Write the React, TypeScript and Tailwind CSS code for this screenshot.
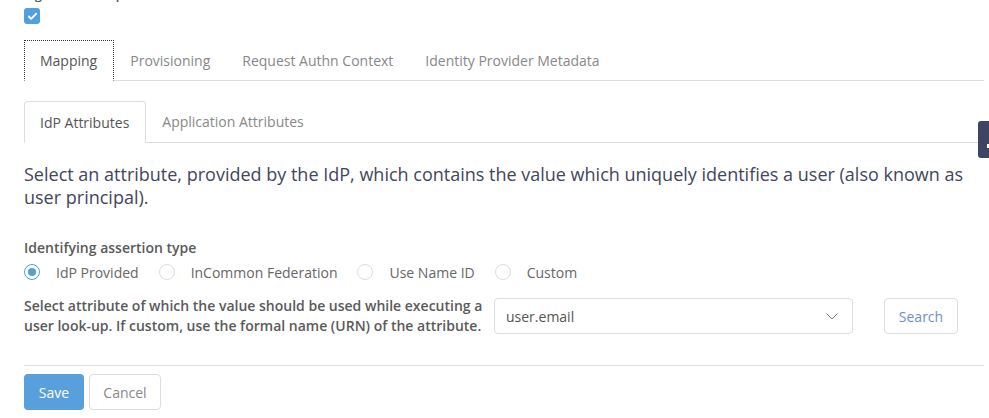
import React, { useState } from 'react';
import { Check } from 'lucide-react';

const topTabs = ['Mapping', 'Provisioning', 'Request Authn Context', 'Identity Provider Metadata'];
const subTabs = ['IdP Attributes', 'Application Attributes'];
const assertionTypes = ['IdP Provided', 'InCommon Federation', 'Use Name ID', 'Custom'];

export default function App() {
  const [assertion, setAssertion] = useState('IdP Provided');

  return (
    <div className="relative min-h-[418px] bg-white font-['Open_Sans',sans-serif] text-[14px] text-[#555] overflow-hidden">
      <div className="pl-6 pr-[5px]">
        {/* Checkbox field, label scrolled off the top */}
        <div className="-mt-[15px] text-[13px] font-semibold leading-[18px] text-[#555]">Sign Authn Request</div>
        <div className="mt-[5px] flex h-4 w-4 items-center justify-center rounded-[3px] bg-[#519fe0]">
          <Check className="h-[11px] w-[11px] text-white" strokeWidth={4} />
        </div>

        {/* Top tabs */}
        <div className="mt-4 flex border-b border-[#ddd]">
          {topTabs.map((t, i) => (
            <div
              key={t}
              className={
                i === 0
                  ? '-mb-px flex h-[41px] items-center border border-dotted border-[#333] border-b-white bg-white pl-[15px] pr-4 text-[#555]'
                  : 'flex h-10 items-center px-4 text-[#888]'
              }
            >
              {t}
            </div>
          ))}
        </div>

        {/* Sub tabs */}
        <div className="mt-5 flex border-b border-[#ddd]">
          {subTabs.map((t, i) => (
            <div
              key={t}
              className={
                i === 0
                  ? '-mb-px flex h-[42px] items-center rounded-t-[4px] border border-[#ddd] border-b-white bg-white pl-[15px] pr-4 text-[#555]'
                  : 'flex h-[41px] items-center px-4 text-[#888]'
              }
            >
              {t}
            </div>
          ))}
        </div>

        <p className="mt-5 text-[18px] leading-[23px] text-[#41465c]">
          Select an attribute, provided by the IdP, which contains the value which uniquely identifies a user (also known as user principal).
        </p>

        <div className="mt-[29px] text-[14px] font-semibold leading-5 text-[#5a5a5a]">Identifying assertion type</div>
        <div className="mt-[4px] flex h-5 items-center">
          {assertionTypes.map((a) => {
            const on = assertion === a;
            return (
              <label key={a} className="mr-[20px] flex cursor-pointer items-center" onClick={() => setAssertion(a)}>
                <span
                  className={
                    on
                      ? 'flex h-4 w-4 items-center justify-center rounded-full border border-[#519fe0] bg-white'
                      : 'h-4 w-4 rounded-full border border-[#ddd] bg-white'
                  }
                >
                  {on && <span className="h-2 w-2 rounded-full bg-[#519fe0]" />}
                </span>
                <span className="ml-4 text-[#666]">{a}</span>
              </label>
            );
          })}
        </div>

        <div className="mt-[14px] flex items-center">
          <div className="w-[470px] pr-[6px] text-[14px] font-semibold leading-5 text-[#5a5a5a]">
            Select attribute of which the value should be used while executing a user look-up. If custom, use the formal name (URN) of the attribute.
          </div>
          <div className="flex h-9 w-[359px] items-center justify-between rounded-[4px] border border-[#ddd] pl-[11px] pr-[14px] text-[#555]">
            <span>user.email</span>
            <svg width="12" height="7" viewBox="0 0 12 7" fill="none" stroke="#777" strokeWidth="1">
              <polyline points="0.5,0.5 6,6 11.5,0.5" />
            </svg>
          </div>
          <button className="ml-[31px] flex h-9 w-[74px] items-center justify-center rounded-[4px] border border-[#ddd] bg-white text-[#6a92bd]">
            Search
          </button>
        </div>

        <div className="mt-[29px] border-t border-[#ddd]" />

        <div className="mt-2 flex gap-[5px]">
          <button className="flex h-9 w-[60px] items-center justify-center rounded-[4px] bg-[#58a0dc] text-white">Save</button>
          <button className="flex h-9 w-[72px] items-center justify-center rounded-[4px] border border-[#ddd] bg-white text-[#888]">
            Cancel
          </button>
        </div>
      </div>

      {/* Side feedback tab */}
      <div className="absolute right-0 top-[121px] flex h-[37px] w-[11px] items-end justify-end rounded-l-[3px] bg-[#3f4462] pb-[10px]">
        <span className="h-[4px] w-[2px] bg-white" />
      </div>
    </div>
  );
}
